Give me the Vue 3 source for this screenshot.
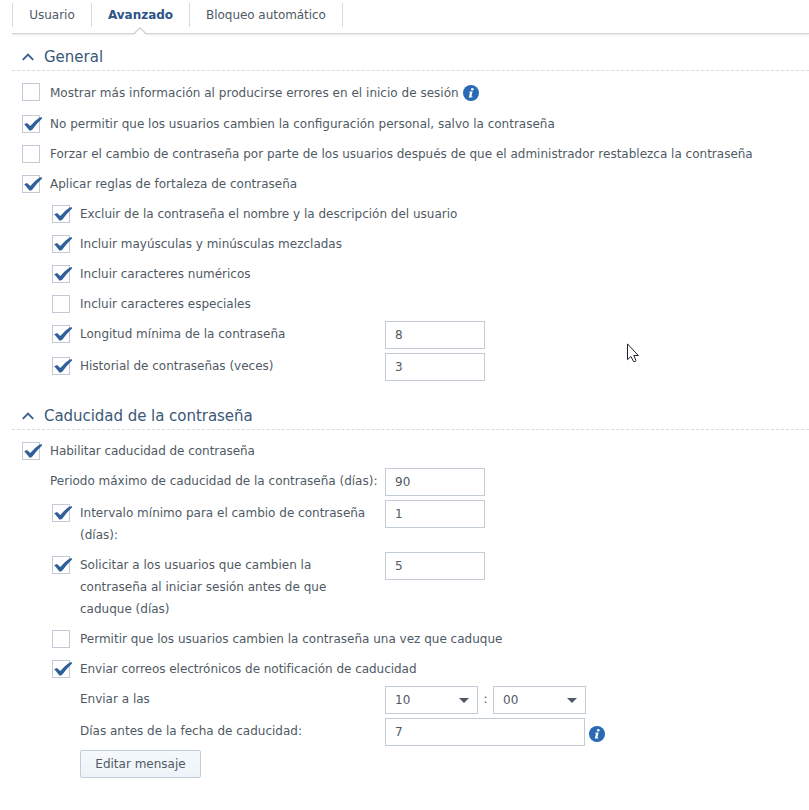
<script setup>
const tabs = [
  { label: 'Usuario', w: 79 },
  { label: 'Avanzado', w: 98, active: true },
  { label: 'Bloqueo automático', w: 152 },
]
const sections = [
  {
    title: 'General',
    rows: [
      { box: true, lines: ['Mostrar más información al producirse errores en el inicio de sesión'], info: true, cls: 'first' },
      { box: true, on: true, lines: ['No permitir que los usuarios cambien la configuración personal, salvo la contraseña'] },
      { box: true, lines: ['Forzar el cambio de contraseña por parte de los usuarios después de que el administrador restablezca la contraseña'] },
      { box: true, on: true, lines: ['Aplicar reglas de fortaleza de contraseña'] },
      { box: true, on: true, sub: true, lines: ['Excluir de la contraseña el nombre y la descripción del usuario'] },
      { box: true, on: true, sub: true, lines: ['Incluir mayúsculas y minúsculas mezcladas'] },
      { box: true, on: true, sub: true, lines: ['Incluir caracteres numéricos'] },
      { box: true, sub: true, lines: ['Incluir caracteres especiales'] },
      { box: true, on: true, sub: true, lines: ['Longitud mínima de la contraseña'], value: '8' },
      { box: true, on: true, sub: true, lines: ['Historial de contraseñas (veces)'], value: '3' },
    ],
  },
  {
    title: 'Caducidad de la contraseña',
    rows: [
      { box: true, on: true, lines: ['Habilitar caducidad de contraseña'], cls: 'tight' },
      { lines: ['Periodo máximo de caducidad de la contraseña (días):'], value: '90' },
      { box: true, on: true, sub: true, lines: ['Intervalo mínimo para el cambio de contraseña', '(días):'], value: '1' },
      { box: true, on: true, sub: true, lines: ['Solicitar a los usuarios que cambien la', 'contraseña al iniciar sesión antes de que', 'caduque (días)'], value: '5' },
      { box: true, sub: true, lines: ['Permitir que los usuarios cambien la contraseña una vez que caduque'] },
      { box: true, on: true, sub: true, lines: ['Enviar correos electrónicos de notificación de caducidad'], cls: 'tight' },
      { sub: true, lines: ['Enviar a las'], time: ['10', '00'] },
      { sub: true, lines: ['Días antes de la fecha de caducidad:'], value: '7', wide: true, info: true },
    ],
  },
]
</script>

<template>
  <main class="page">
    <nav class="tabs">
      <div v-for="t in tabs" :key="t.label" class="tab" :class="{ active: t.active }" :style="{ width: t.w + 'px' }">
        {{ t.label }}
        <svg v-if="t.active" class="notch" width="14" height="9" viewBox="0 0 14 9">
          <path d="M0 9 L7 1 L14 9Z" fill="#fff" />
          <path d="M0.5 7.2 L7 0.8 L13.5 7.2" fill="none" stroke="#cfd1d4" stroke-width="1.4" />
        </svg>
      </div>
    </nav>
    <section v-for="s in sections" :key="s.title">
      <h2>
        <svg width="12" height="8" viewBox="0 0 12 8"><path d="M0.8 6.8 L6 1.5 L11.2 6.8" fill="none" stroke="#3b5f8f" stroke-width="1.9" /></svg>
        <span>{{ s.title }}</span>
      </h2>
      <div class="rows">
        <div v-for="r in s.rows" :key="r.lines[0]" class="row" :class="[r.cls, { sub: r.sub, field: r.value || r.time }]">
          <span class="slot">
            <span v-if="r.box" class="box">
              <svg v-if="r.on" width="20" height="18" viewBox="0 0 20 18">
                <path d="M2.2 9.2 L5 7.9 L8.3 11 Q13 5.4 17.6 2.5 L20 2.2 L20 3.4 Q14.5 8.6 10 15 L7.6 15.7 Q4.8 12 2.2 9.2Z" fill="#315f99" />
              </svg>
            </span>
          </span>
          <div class="label"><div v-for="l in r.lines" :key="l" class="line">{{ l }}</div></div>
          <div v-if="r.value" class="input" :class="{ wide: r.wide }">{{ r.value }}</div>
          <template v-if="r.time">
            <div class="input select">{{ r.time[0] }}<i></i></div>
            <span class="colon">:</span>
            <div class="input select">{{ r.time[1] }}<i></i></div>
          </template>
          <svg v-if="r.info" class="info" width="16" height="16" viewBox="0 0 16 16">
            <circle cx="8" cy="8" r="8" fill="#2a69b4" />
            <circle cx="9.3" cy="4.2" r="1.3" fill="#fff" />
            <path d="M6.4 6.4 H9.6 L8.4 11.4 H9.5 L9.2 12.6 H5.8 L7 7.5 H6.2Z" fill="#fff" />
          </svg>
        </div>
      </div>
    </section>
    <button>Editar mensaje</button>
    <svg class="cursor" width="14" height="20" viewBox="0 0 14 20">
      <path d="M1.5 0.9 V16.7 L4.9 13.5 L7.6 18.6 Q9.8 19 9.9 17.4 L7.8 12.5 H12.3Z" fill="#fff" stroke="#20222c" />
    </svg>
  </main>
</template>

<style>
body { background: #fff; overflow: hidden; }
</style>

<style scoped>
.page { box-sizing: border-box; position: relative; width: 809px; height: 810px; padding-left: 12px; overflow: hidden; font: 12px "DejaVu Sans", Verdana, sans-serif; color: #505a64; }
.tabs { display: flex; height: 34px; padding-top: 3px; box-sizing: border-box; border-bottom: 1px solid #d0d3d7; box-shadow: 0 1px 2px rgba(0, 0, 0, .1); clip-path: inset(0 0 -4px 0); }
.tab { box-sizing: border-box; height: 24px; border-left: 1px solid #d5dbe0; line-height: 24px; text-align: center; position: relative; white-space: nowrap; }
.tab:last-child { border-right: 1px solid #d5dbe0; box-sizing: content-box; letter-spacing: -0.05px; }
.active { font-weight: bold; color: #2d5487; }
.notch { position: absolute; left: 41px; top: 24px; }
h2 { display: flex; align-items: center; gap: 10px; box-sizing: border-box; height: 37px; margin: 0; padding: 9px 0 0 10px; border-bottom: 1px dashed #d5dbe0; font-size: 15px; font-weight: normal; line-height: 20px; color: #3b5878; }
section + section h2 { height: 47px; padding-top: 19px; letter-spacing: -0.04px; }
.rows { padding: 6px 0 0 10px; }
.row { display: flex; min-height: 30px; align-items: flex-start; }
.row.sub { padding-left: 30px; }
.row.field { min-height: 32px; }
.row.first { min-height: 32px; }
.slot { width: 28px; flex: none; }
.box { display: block; box-sizing: border-box; width: 18px; height: 18px; margin-top: 6px; border: 1px solid #c3cad6; background: #fff; }
.box svg { display: block; margin: -1px; overflow: visible; }
.label { padding: 4px 0; line-height: 22px; white-space: nowrap; }
.first .label { padding-top: 5px; letter-spacing: 0.02px; }
.tight .label { letter-spacing: -0.04px; }
.field .label { width: 335px; flex: none; }
.field.sub .label { width: 305px; }
.input { box-sizing: border-box; width: 100px; height: 28px; margin-top: 2px; padding-left: 9px; border: 1px solid #c3cbd4; line-height: 27px; background: #fff; }
.input.wide { width: 200px; }
.select { width: 93px; display: flex; justify-content: space-between; padding-right: 8px; }
.select i { width: 0; height: 0; margin-top: 11px; border: 5px solid transparent; border-top: 5px solid #505866; border-bottom: 0; }
.colon { width: 15px; text-align: center; line-height: 30px; }
.info { margin: 8px 0 0 4px; }
.field .info { margin-top: 10px; }
button { display: block; width: 121px; height: 28px; margin: 2px 0 0 68px; padding: 0; border: 1px solid #c2cddb; border-radius: 2px; background: linear-gradient(#f5f9fc, #edf3f8); font: inherit; color: #505a64; }
.cursor { position: absolute; left: 626px; top: 343px; }
</style>
